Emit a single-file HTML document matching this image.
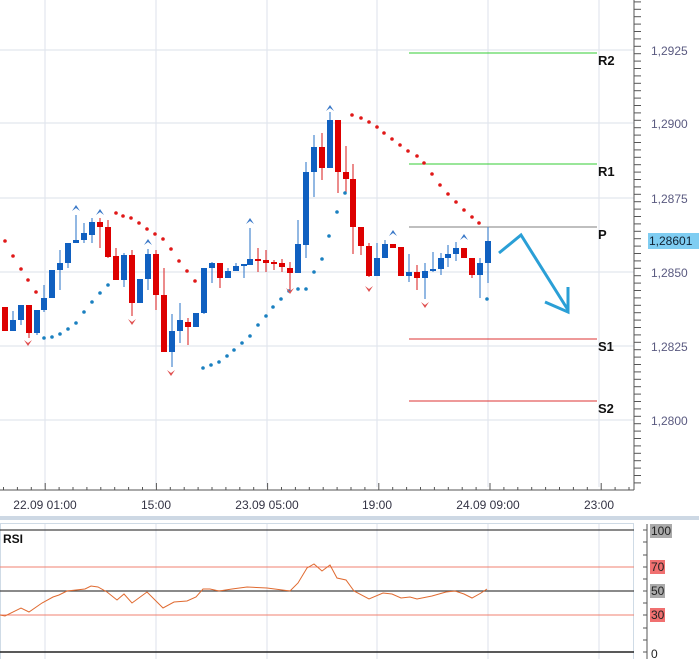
<!DOCTYPE html>
<html><head><meta charset="utf-8"><style>
html,body{margin:0;padding:0;background:#fff;width:699px;height:659px;overflow:hidden;font-family:"Liberation Sans",sans-serif}
svg text{font-family:"Liberation Sans",sans-serif}
</style></head><body>
<svg id="s" width="699" height="659" xmlns="http://www.w3.org/2000/svg">
<rect width="699" height="659" fill="#fff"/>
<g id="grid" stroke="#e2e6ee" stroke-width="1.2">
<line x1="0" y1="50" x2="634" y2="50"/><line x1="0" y1="123" x2="634" y2="123"/><line x1="0" y1="198" x2="634" y2="198"/><line x1="0" y1="272" x2="634" y2="272"/><line x1="0" y1="346" x2="634" y2="346"/><line x1="0" y1="420" x2="634" y2="420"/>
<line x1="45" y1="0" x2="45" y2="487"/><line x1="156" y1="0" x2="156" y2="487"/><line x1="267" y1="0" x2="267" y2="487"/><line x1="377" y1="0" x2="377" y2="487"/><line x1="488" y1="0" x2="488" y2="487"/><line x1="599" y1="0" x2="599" y2="487"/>
<line x1="45" y1="524" x2="45" y2="659"/><line x1="156" y1="524" x2="156" y2="659"/><line x1="267" y1="524" x2="267" y2="659"/><line x1="377" y1="524" x2="377" y2="659"/><line x1="488" y1="524" x2="488" y2="659"/><line x1="599" y1="524" x2="599" y2="659"/>
</g>
<g stroke="#555" stroke-width="1" id="tt"></g>
<g font-size="12" fill="#334" text-anchor="middle">
<text x="45" y="509">22.09 01:00</text><text x="156" y="509">15:00</text><text x="267" y="509">23.09 05:00</text><text x="377" y="509">19:00</text><text x="488" y="509">24.09 09:00</text><text x="599" y="509">23:00</text>
</g>
<rect x="0" y="516" width="699" height="4" fill="#cdd8e4"/>
<rect x="0.5" y="523.5" width="633" height="140" fill="none" stroke="#cfdbe6"/>
<g id="py" font-size="12" fill="#5a5a80">
<text x="651" y="55">1,2925</text><text x="651" y="128">1,2900</text><text x="651" y="203">1,2875</text><text x="651" y="277">1,2850</text><text x="651" y="351">1,2825</text><text x="651" y="425">1,2800</text>
</g>
<rect x="648" y="233" width="51" height="16" fill="#7fcdf2"/>
<text x="649" y="245" font-size="12" fill="#123">1,28601</text>
<line x1="409" y1="53" x2="597" y2="53" stroke="#33cc33"/>
<line x1="409" y1="164" x2="597" y2="164" stroke="#33cc33"/>
<line x1="409" y1="227" x2="597" y2="227" stroke="#aaa" stroke-width="1.5"/>
<line x1="409" y1="339" x2="597" y2="339" stroke="#dd3333"/>
<line x1="409" y1="401" x2="597" y2="401" stroke="#dd3333"/>
<g font-size="13" font-weight="bold" fill="#111">
<text x="598" y="65">R2</text><text x="598" y="176">R1</text><text x="598" y="239">P</text><text x="598" y="351">S1</text><text x="598" y="413">S2</text>
</g>
<g id="c"></g>
<polyline points="499,253 521,235 568,310" fill="none" stroke="#2a9fd6" stroke-width="3"/>
<polyline points="568,287 568,312 545,302" fill="none" stroke="#2a9fd6" stroke-width="3"/>
<line x1="0" y1="530" x2="634" y2="530" stroke="#444" stroke-width="1.3"/>
<line x1="0" y1="567" x2="634" y2="567" stroke="#f08070"/>
<line x1="0" y1="591" x2="634" y2="591" stroke="#444" stroke-width="1.3"/>
<line x1="0" y1="615" x2="634" y2="615" stroke="#f08070"/>
<line x1="0" y1="652" x2="634" y2="652" stroke="#222" stroke-width="1.5"/>
<text x="3" y="543" font-size="12" font-weight="bold" fill="#111">RSI</text>
<polyline fill="none" stroke="#e06a30" stroke-width="1" points="0,615 5,616 21,608 29,612 42,603 53,597 59,595 67,591 85,589 91,586 98,587 107,592 117,600 124,594 132,603 147,592 163,608 174,602 187,601 196,597 203,589 210,589 219,591 232,589 247,587 267,588 290,591 298,583 307,568 314,564 322,571 330,565 337,578 346,580 354,591 369,599 383,593 392,594 401,598 410,597 417,599 432,596 446,592 455,591 464,594 472,598 481,593 487,589"/>
<line x1="647" y1="524" x2="647" y2="659" stroke="#555"/>
<g stroke="#555"><line x1="643" y1="530" x2="647" y2="530"/><line x1="643" y1="542" x2="647" y2="542"/><line x1="643" y1="555" x2="647" y2="555"/><line x1="643" y1="567" x2="647" y2="567"/><line x1="643" y1="579" x2="647" y2="579"/><line x1="643" y1="591" x2="647" y2="591"/><line x1="643" y1="603" x2="647" y2="603"/><line x1="643" y1="615" x2="647" y2="615"/><line x1="643" y1="628" x2="647" y2="628"/><line x1="643" y1="640" x2="647" y2="640"/><line x1="643" y1="652" x2="647" y2="652"/></g>
<rect x="650" y="524" width="22" height="14" fill="#aaa"/><text x="651" y="535" font-size="12" fill="#222">100</text>
<rect x="650" y="560" width="15" height="14" fill="#f07070"/><text x="651" y="571" font-size="12" fill="#222">70</text>
<rect x="650" y="584" width="15" height="14" fill="#aaa"/><text x="651" y="595" font-size="12" fill="#222">50</text>
<rect x="650" y="608" width="15" height="14" fill="#f07070"/><text x="651" y="619" font-size="12" fill="#222">30</text>
<text x="651" y="658" font-size="12" fill="#222">0</text>
</svg>
<script>
var NS="http://www.w3.org/2000/svg",g=document.getElementById("c");
function el(t,a,p){var e=document.createElementNS(NS,t);for(var k in a)e.setAttribute(k,a[k]);(p||g).appendChild(e);return e;}
var tt=document.getElementById("tt");
el("line",{x1:634,y1:0,x2:634,y2:490,stroke:"#555"},tt);
for(var y=50-74*0.75;y<490;y+=7.4){var maj=Math.abs(((y-50)/74)-Math.round((y-50)/74))<0.02;el("line",{x1:634,y1:y,x2:maj?648:641,y2:y,stroke:"#555"},tt);}
for(var x=45-111;x<634;x+=13.9){if(x<0)continue;var m=Math.abs(((x-45)/111)-Math.round((x-45)/111))<0.02;el("line",{x1:x,y1:490,x2:x,y2:m?483:487,stroke:"#555"},tt);}
el("line",{x1:0,y1:490,x2:634,y2:490,stroke:"#555"},tt);
var C=[[5,307,331,307,331],[13,331,320,311,331],[21,320,305,305,325],[29,305,333,305,338],[37,333,310,310,335],[44,310,298,285,312],[52,298,270,270,298],[60,270,263,250,290],[68,263,243,243,268],[76,243,240,215,243],[84,240,233,223,243],[92,235,222,218,243],[100,222,227,218,248],[108,227,257,220,258],[116,256,280,248,280],[124,280,255,253,287],[132,255,303,250,316],[140,303,279,279,303],[148,279,254,249,290],[156,254,295,250,310],[164,295,352,268,352],[172,352,331,314,367],[180,331,320,303,343],[188,322,327,318,345],[196,327,313,313,327],[204,313,268,268,314],[212,268,263,262,283],[220,263,278,263,288],[228,278,271,268,278],[236,271,266,263,270],[244,266,264,264,278],[250,265,259,228,265],[258,259,261,248,272],[266,260,263,250,272],[274,262,263,260,270],[282,263,267,259,272],[290,268,273,262,290],[298,273,244,220,273],[306,245,172,162,258],[314,172,147,135,197],[322,147,168,133,180],[330,168,120,112,168],[338,120,172,120,193],[346,172,179,146,192],[353,179,227,164,254],[361,227,246,227,255],[369,246,276,243,277],[377,276,258,243,276],[385,258,244,240,258],[393,244,248,244,248],[401,247,276,247,276],[409,276,272,254,282],[417,272,278,265,290],[425,278,271,263,299],[433,271,269,252,272],[441,269,258,253,275],[448,258,254,245,267],[456,254,248,242,261],[464,248,258,248,258],[472,258,275,258,278],[480,275,263,258,298],[488,263,241,227,283]];
C.forEach(function(d){var col=d[2]<d[1]?"#1060c0":"#dd0000";var wc=d[2]<d[1]?"#4a88d0":"#e04040";
el("line",{x1:d[0],y1:d[3],x2:d[0],y2:d[4],stroke:wc,"stroke-width":1.2});
var t=Math.min(d[1],d[2]),h=Math.max(2,Math.abs(d[1]-d[2]));el("rect",{x:d[0]-3,y:t,width:6,height:h,fill:col});});
var R=[[5,241],[13,256],[21,269],[28,280],[36,292],[116,213],[123,216],[131,218],[139,223],[147,229],[155,234],[163,239],[171,249],[179,261],[187,271],[195,281],[352,115],[361,118],[369,122],[377,127],[384,133],[392,139],[400,145],[408,151],[417,156],[424,163],[432,174],[440,185],[448,194],[456,202],[464,210],[472,217],[479,223]];
var B=[[44,338],[52,337],[60,334],[68,329],[76,323],[84,312],[92,302],[100,293],[108,285],[203,368],[211,365],[219,362],[227,356],[234,350],[242,343],[250,336],[258,325],[266,316],[273,307],[281,299],[289,291],[298,289],[306,289],[314,272],[322,259],[329,236],[337,212],[345,193],[487,299]];
R.forEach(function(p){el("circle",{cx:p[0],cy:p[1],r:1.8,fill:"#e01818"});});
B.forEach(function(p){el("circle",{cx:p[0],cy:p[1],r:1.8,fill:"#1a80c0"});});
[[76,208],[100,212],[148,242],[250,221],[330,108],[393,233],[464,237]].forEach(function(p){el("path",{d:"M"+(p[0]-4)+","+(p[1]+3)+" L"+p[0]+","+(p[1]-3)+" L"+(p[0]+4)+","+(p[1]+3)+" L"+p[0]+","+(p[1])+"Z",fill:"#3a78c8"});});
[[28,343],[132,322],[171,373],[290,291],[369,289],[425,305]].forEach(function(p){el("path",{d:"M"+(p[0]-4)+","+(p[1]-3)+" L"+p[0]+","+(p[1]+3)+" L"+(p[0]+4)+","+(p[1]-3)+" L"+p[0]+","+(p[1])+"Z",fill:"#e05050"});});
</script>
</body></html>
